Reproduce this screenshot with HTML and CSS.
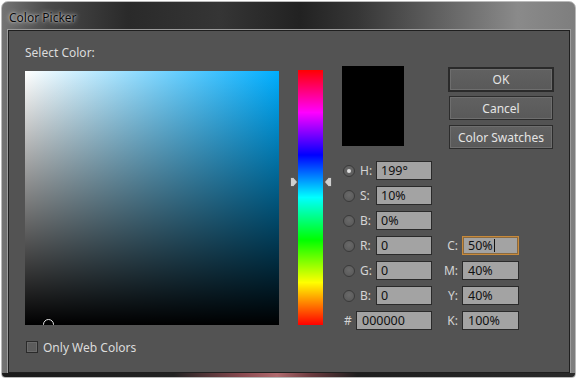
FILE: index.html
```html
<!DOCTYPE html>
<html>
<head>
<meta charset="utf-8">
<link rel="stylesheet" href="styles.css">
</head>
<body>
<div class="window">
  <div class="titlebar"><span class="title">Color Picker</span></div>
  <div class="panel">
    <div class="heading">Select Color:</div>
    <div class="body">
      <div class="col-field">
        <div class="field"><span class="marker"></span></div>
        <label class="webcheck"><span class="checkbox"></span><span>Only Web Colors</span></label>
      </div>
      <div class="col-hue">
        <div class="hue"></div>
        <svg class="arrow arrow-left" width="8" height="10" viewBox="0 0 8 10"><polygon points="0.5,0.5 3.5,0.5 7.5,5 3.5,9.5 0.5,9.5" fill="#cfcfcf" stroke="#3a3a3a" stroke-width="0.6"/></svg>
        <svg class="arrow arrow-right" width="8" height="10" viewBox="0 0 8 10"><polygon points="7.5,0.5 4.5,0.5 0.5,5 4.5,9.5 7.5,9.5" fill="#cfcfcf" stroke="#3a3a3a" stroke-width="0.6"/></svg>
      </div>
      <div class="col-values">
        <div class="preview"></div>
        <div class="rows">
          <div class="row"><span class="radio on"></span><span class="lbl">H:</span><span class="input">199°</span></div>
          <div class="row"><span class="radio"></span><span class="lbl">S:</span><span class="input">10%</span></div>
          <div class="row"><span class="radio"></span><span class="lbl">B:</span><span class="input">0%</span></div>
          <div class="row"><span class="radio"></span><span class="lbl">R:</span><span class="input">0</span></div>
          <div class="row"><span class="radio"></span><span class="lbl">G:</span><span class="input">0</span></div>
          <div class="row"><span class="radio"></span><span class="lbl">B:</span><span class="input">0</span></div>
          <div class="row hexrow"><span class="hash">#</span><span class="input hex">000000</span></div>
        </div>
      </div>
      <div class="col-actions">
        <div class="buttons">
          <div class="btn default">OK</div>
          <div class="btn">Cancel</div>
          <div class="btn swatch">Color Swatches</div>
        </div>
        <div class="cmyk">
          <div class="row"><span class="clbl">C:</span><span class="input cin focus">50%<i class="caret"></i></span></div>
          <div class="row"><span class="clbl">M:</span><span class="input cin">40%</span></div>
          <div class="row"><span class="clbl">Y:</span><span class="input cin">40%</span></div>
          <div class="row"><span class="clbl">K:</span><span class="input cin">100%</span></div>
        </div>
      </div>
    </div>
  </div>
  <div class="bottomframe"></div>
</div>
</body>
</html>
```
FILE: styles.css
```css
* { box-sizing: border-box; }
html, body { margin: 0; padding: 0; }
body {
  width: 577px;
  height: 379px;
  background: #ffffff;
  font-family: "Noto Sans", "Open Sans", sans-serif;
  font-size: 12px;
  overflow: hidden;
}
.window {
  margin: 1px 0 0 1px;
  width: 575px;
  height: 377px;
  border: 1px solid #b9b9b9;
  border-radius: 7px 7px 4px 4px;
  background:
    linear-gradient(90deg, #747474 0%, #4a4a4a 8%, #2a2a2a 22%, #353535 38%, #222 52%, #363636 62%, #666 78%, #8a8a8a 90%, #7e7e7e 100%);
  display: flex;
  flex-direction: column;
  padding: 0 4px;
}
.titlebar {
  height: 27px;
  flex: none;
  padding-left: 3px;
  display: flex;
  align-items: center;
}
.title {
  color: #0a0a0a;
  font-size: 12px;
  text-shadow: 0 0 5px rgba(255,255,255,0.85), 0 0 2px rgba(255,255,255,0.6);
  margin-top: 3px;
}
.panel {
  height: 343px;
  flex: none;
  background: #535353;
  border: 1px solid #1f1f1f;
  box-shadow: 0 0 0 1px #9c9c9c;
  margin: 1px 1px 0 2px;
  padding: 14px 0 0 16px;
}
.heading {
  color: #dcdcdc;
  line-height: 16px;
  height: 16px;
}
.body {
  display: flex;
  margin-top: 5px;
}
.col-field {
  width: 254px;
  flex: none;
  padding-top: 5px;
}
.field {
  position: relative;
  width: 254px;
  height: 254px;
  overflow: hidden;
  background:
    linear-gradient(to top, #000 0%, rgba(0,0,0,0) 100%),
    linear-gradient(to right, #ffffff 0%, #00aeff 100%);
}
.marker {
  position: absolute;
  left: 18px;
  top: 248px;
  width: 11px;
  height: 11px;
  border: 1px solid #e8e8e8;
  border-radius: 50%;
}
.webcheck {
  display: flex;
  align-items: center;
  margin-top: 14px;
  height: 16px;
  color: #dcdcdc;
  gap: 5px;
}
.checkbox {
  width: 12px;
  height: 12px;
  margin-left: 1px;
  border: 1px solid #2a2a2a;
  background: #5c5c5c;
  box-shadow: inset 0 0 0 1px #6a6a6a;
}
.col-hue {
  position: relative;
  margin-left: 19px;
  width: 25px;
  flex: none;
  padding-top: 4px;
}
.hue {
  width: 25px;
  height: 255px;
  background: linear-gradient(to bottom, #ff0000 0%, #ff00ff 16.67%, #0000ff 33.33%, #00ffff 50%, #00ff00 66.67%, #ffff00 83.33%, #ff0000 100%);
}
.arrow { position: absolute; top: 111px; }
.arrow-left { left: -8px; }
.arrow-right { left: 26px; }
.col-values {
  margin-left: 19px;
  width: 90px;
  flex: none;
}
.preview {
  width: 62px;
  height: 80px;
  background: #000;
}
.rows {
  margin-top: 15px;
  display: flex;
  flex-direction: column;
  gap: 6px;
}
.row {
  display: flex;
  align-items: center;
  height: 19px;
}
.radio {
  width: 12px;
  height: 12px;
  margin-left: 1px;
  border-radius: 50%;
  border: 1px solid #3a3a3a;
  background: radial-gradient(circle at 50% 40%, #6a6a6a, #565656);
  position: relative;
}
.radio.on::after {
  content: "";
  position: absolute;
  left: 3px;
  top: 3px;
  width: 4px;
  height: 4px;
  border-radius: 50%;
  background: #e0e0e0;
}
.lbl {
  color: #d4d4d4;
  width: 21px;
  padding-left: 5px;
}
.input {
  display: flex;
  align-items: center;
  width: 56px;
  height: 19px;
  background: #a3a3a3;
  border: 1px solid #2a2a2a;
  color: #111;
  font-size: 12.5px;
  padding-left: 4px;
}
.hash {
  color: #d4d4d4;
  width: 14px;
  padding-left: 2px;
}
.input.hex { width: 76px; padding-left: 5px; }
.col-actions {
  margin-left: 8px;
  width: 115px;
  flex: none;
}
.buttons {
  margin-left: 9px;
  margin-top: 1px;
  display: flex;
  flex-direction: column;
  gap: 4px;
}
.btn {
  width: 104px;
  height: 24px;
  border: 1px solid #2c2c2c;
  background: linear-gradient(#616161, #595959);
  box-shadow: inset 0 0 0 1px #6e6e6e;
  color: #e4e4e4;
  display: flex;
  align-items: center;
  justify-content: center;
}
.btn.default {
  width: 106px;
  height: 25px;
  margin-left: -1px;
  border: 2px solid #2a2a2a;
}
.btn.swatch { margin-top: 1px; }
.cmyk {
  margin-top: 87px;
  display: flex;
  flex-direction: column;
  gap: 6px;
}
.clbl {
  color: #d4d4d4;
  width: 22px;
  padding-right: 4px;
  text-align: right;
}
.input.cin { width: 57px; padding-left: 5px; }
.input.focus {
  border-color: #c98a3a;
  box-shadow: inset 0 0 0 1px #8a6a40;
}
.caret {
  display: inline-block;
  width: 1px;
  height: 13px;
  background: #111;
  margin-left: 1px;
}
.bottomframe {
  flex: 1;
  margin: 0 -4px;
  border-radius: 0 0 4px 4px;
  background: linear-gradient(90deg, #1a1a1a 0%, #222 30%, #8a4a50 42%, #b06a6e 48%, #6a3a3e 54%, #1e1e1e 62%, #2a2a2a 100%);
}
```
